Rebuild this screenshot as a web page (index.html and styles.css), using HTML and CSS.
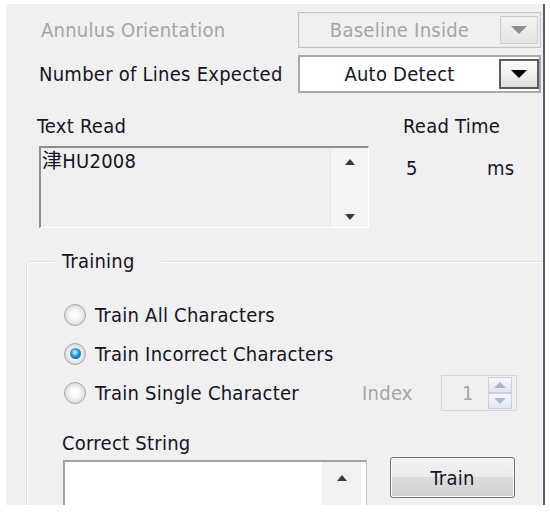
FILE: index.html
```html
<!DOCTYPE html>
<html>
<head>
<meta charset="utf-8">
<link rel="stylesheet" href="styles.css">
</head>
<body>
<div class="panel">
  <div class="row row1">
    <span class="label disabled">Annulus Orientation</span>
    <div class="combo combo-disabled">
      <span class="combo-text">Baseline Inside</span>
      <span class="combo-btn"><svg width="16" height="8" viewBox="0 0 16 8"><polygon points="0,0 16,0 8,8"/></svg></span>
    </div>
  </div>
  <div class="row row2">
    <span class="label">Number of Lines Expected</span>
    <div class="combo combo-active">
      <span class="combo-text">Auto Detect</span>
      <span class="combo-btn"><svg width="16" height="8" viewBox="0 0 16 8"><polygon points="0,0 16,0 8,8"/></svg></span>
    </div>
  </div>
  <div class="read">
    <div class="read-left">
      <div class="caption">Text Read</div>
      <div class="textarea">
        <div class="textarea-text">津HU2008</div>
        <div class="vscroll">
          <svg width="10" height="6" viewBox="0 0 10 6"><polygon points="0,6 10,6 5,0"/></svg>
          <svg width="10" height="6" viewBox="0 0 10 6"><polygon points="0,0 10,0 5,6"/></svg>
        </div>
      </div>
    </div>
    <div class="read-right">
      <div class="caption">Read Time</div>
      <div class="values"><span class="val">5</span><span>ms</span></div>
    </div>
  </div>
  <fieldset class="group">
    <legend>Training</legend>
    <div class="gbody">
      <div class="opt-row">
        <div class="opt"><span class="radio"></span><span>Train All Characters</span></div>
      </div>
      <div class="opt-row">
        <div class="opt"><span class="radio checked"></span><span>Train Incorrect Characters</span></div>
      </div>
      <div class="opt-row">
        <div class="opt"><span class="radio"></span><span>Train Single Character</span></div>
        <span class="idx-label disabled">Index</span>
        <div class="spinner">
          <span class="spin-val">1</span>
          <div class="spin">
            <span class="spin-btn"><svg width="12" height="6" viewBox="0 0 12 6"><polygon points="0,6 12,6 6,0"/></svg></span>
            <span class="spin-btn"><svg width="12" height="6" viewBox="0 0 12 6"><polygon points="0,0 12,0 6,6"/></svg></span>
          </div>
        </div>
      </div>
      <div class="caption cs-label">Correct String</div>
      <div class="bottom">
        <div class="textbox">
          <div class="tb-text"></div>
          <div class="tb-scroll">
            <svg width="10" height="6" viewBox="0 0 10 6"><polygon points="0,6 10,6 5,0"/></svg>
          </div>
        </div>
        <div class="button">Train</div>
      </div>
    </div>
  </fieldset>
</div>
</body>
</html>
```

FILE: styles.css
```css
* { box-sizing: border-box; }
html, body { margin: 0; padding: 0; background: #ffffff; }
body {
  font-family: "DejaVu Sans Condensed", "DejaVu Sans", sans-serif;
  font-stretch: condensed;
  font-size: 20px;
  letter-spacing: 0.25px;
  color: #141426;
}
.panel {
  margin: 4px 0 0 6px;
  width: 539px;
  height: 501px;
  background: #f0f0f0;
  border-right: 2px solid #56606e;
  overflow: hidden;
  display: flex;
  flex-direction: column;
}
.row { display: flex; align-items: center; padding-left: 33px; flex: none; }
.row1 { margin-top: 8px; height: 36px; }
.row2 { margin-top: 7px; height: 38px; }
.row1 .label { padding-left: 2px; }
.label { flex: 1; line-height: 22px; white-space: nowrap; }
.disabled { color: #a5a5a5; }
.combo {
  width: 243px;
  height: 100%;
  margin-right: 2px;
  display: flex;
  align-items: center;
}
.combo-text { flex: 1; text-align: center; line-height: 22px; }
.combo-btn { display: flex; align-items: center; justify-content: center; }
.combo-disabled {
  border: 1px solid #c4c4c4;
  box-shadow: inset 0 0 0 1px #e8e8e8;
  color: #a5a5a5;
}
.combo-disabled .combo-btn {
  width: 38px;
  height: 28px;
  margin-right: 2px;
  border: 1px solid #cbcbcb;
  background: linear-gradient(#f4f4f4, #e4e4e4);
}
.combo-disabled svg { fill: #8e8e8e; }
.combo-active {
  background: #ffffff;
  border: 2px solid #a9a9a9;
}
.combo-active .combo-btn {
  width: 40px;
  height: 30px;
  border: 2px solid #5c5c5c;
  background: linear-gradient(#fbfbfb 0%, #f0f0f0 50%, #dedede 100%);
}
.combo-active svg { fill: #000; }

.read { display: flex; margin-top: 22px; padding-left: 31px; flex: none; }
.read-left { width: 366px; }
.caption { line-height: 22px; white-space: nowrap; }
.textarea {
  margin: 9px 0 0 2px;
  width: 330px;
  height: 82px;
  border-top: 2px solid #8e8e8e;
  border-left: 2px solid #8e8e8e;
  border-right: 1px solid #ffffff;
  border-bottom: 1px solid #ffffff;
  display: flex;
}
.textarea-text {
  flex: 1;
  padding: 2px 0 0 1px;
  line-height: 22px;
  font-family: "DejaVu Sans Condensed", "DejaVu Sans", "Noto Sans CJK SC", sans-serif;
}
.vscroll {
  width: 38px;
  background: #f4f4f4;
  border-left: 1px solid #e6e6e6;
  display: flex;
  flex-direction: column;
  justify-content: space-between;
  align-items: center;
  padding: 11px 0 7px;
}
.vscroll svg, .tb-scroll svg { fill: #3a3a3a; }
.values { display: flex; margin-top: 20px; padding-left: 3px; line-height: 22px; }
.val { width: 81px; }

.group {
  margin: 22px 0 0 20px;
  width: 540px;
  min-height: 320px;
  border: 1px solid #d5dfe5;
  border-radius: 4px;
  box-shadow: inset 1px 1px 0 #ffffff;
  padding: 0 0 0 28px;
  flex: none;
}
.group legend {
  padding: 0 26px 0 7px;
  line-height: 22px;
  background: #f0f0f0;
}
.gbody { padding: 23px 0 0 7px; }
.opt-row { display: flex; align-items: center; height: 39px; }
.opt { width: 300px; display: flex; align-items: center; gap: 9px; padding-left: 2px; white-space: nowrap; }
.radio {
  width: 22px;
  height: 22px;
  flex: none;
  border-radius: 50%;
  border: 1px solid #a8a8a8;
  background: radial-gradient(circle, #fbfbfb 0 30%, #dadada 72%, #eeeeee 100%);
  display: flex;
  align-items: center;
  justify-content: center;
}
.radio.checked::after {
  content: "";
  width: 11px;
  height: 11px;
  border-radius: 50%;
  background: radial-gradient(circle at 45% 40%, #9be6ff 0 12%, #2a93d6 45%, #0d3f7c 100%);
}
.idx-label { width: 79px; line-height: 22px; }
.spinner {
  width: 76px;
  height: 36px;
  border: 1px solid #d6d6d6;
  display: flex;
  align-items: center;
}
.spin-val { color: #a5a5a5; padding-left: 20px; line-height: 22px; }
.spin {
  width: 24px;
  height: 32px;
  margin: 0 4px 0 auto;
  display: flex;
  flex-direction: column;
}
.spin-btn {
  flex: 1;
  border: 1px solid #c7cfe0;
  background: linear-gradient(#f5f7fa, #e2e7f0);
  display: flex;
  align-items: center;
  justify-content: center;
}
.spin-btn svg { fill: #a9b7d3; }
.cs-label { margin-top: 20px; }
.bottom { display: flex; align-items: flex-start; margin-top: 3px; }
.textbox {
  margin: 3px 0 0 1px;
  width: 304px;
  height: 80px;
  background: #ffffff;
  border-top: 2px solid #a3a3a3;
  border-left: 2px solid #a3a3a3;
  border-right: 1px solid #c4c4c4;
  display: flex;
}
.tb-text { flex: 1; }
.tb-scroll {
  width: 39px;
  margin-right: 5px;
  background: #f1f1f1;
  display: flex;
  justify-content: center;
  align-items: flex-start;
  padding-top: 13px;
}
.button {
  margin-left: 23px;
  width: 125px;
  height: 41px;
  border: 1px solid #707070;
  border-radius: 3px;
  background: linear-gradient(#f2f2f2 0%, #ebebeb 50%, #dddddd 50%, #cfcfcf 100%);
  box-shadow: inset 0 0 0 1px #fbfbfb;
  display: flex;
  align-items: center;
  justify-content: center;
  line-height: 22px;
}
```
